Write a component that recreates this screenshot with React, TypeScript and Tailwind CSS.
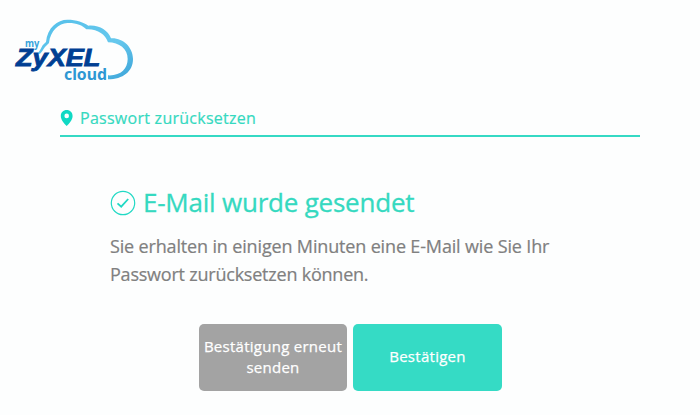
import React from "react";

function Logo() {
  return (
    <svg width="140" height="80" viewBox="0 0 420 240" role="img" aria-label="myZyXEL cloud">
      <defs>
        <linearGradient id="cloud" x1="0" y1="0" x2="1" y2="1">
          <stop offset="0" stopColor="#55c0ea" />
          <stop offset="0.6" stopColor="#66c8ed" />
          <stop offset="1" stopColor="#3ba3d8" />
        </linearGradient>
      </defs>
      <path
        d="M97 131C104 124 108 115 113 106L123 96C127 52 158 29 187 29C214 29 237 37 250 47C281 44 309 60 318 85C354 83 384 112 384 147C384 184 354 208 309 208L309 196C347 198 368 176 368 147C368 117 343 97 309 97C301 73 277 56 244 58C232 45 212 38 187 39C162 40 136 62 132 99L120 111C114 120 110 127 105 131Z"
        fill="url(#cloud)"
      />
      <text x="60" y="111" fontFamily="'Noto Sans', sans-serif" fontWeight="700" fontSize="29" textLength="43" lengthAdjust="spacingAndGlyphs" fill="#35a3dc">my</text>
      <text x="33" y="168" fontFamily="'Liberation Sans', Arial, sans-serif" fontWeight="700" fontStyle="italic" fontSize="70" textLength="253" lengthAdjust="spacingAndGlyphs" fill="#003f93" stroke="#003f93" strokeWidth="2.5">ZyXEL</text>
      <text x="177" y="209" fontFamily="'Noto Sans', sans-serif" fontWeight="700" fontSize="47" textLength="129" lengthAdjust="spacingAndGlyphs" fill="#2e97d3">cloud</text>
    </svg>
  );
}

function PinIcon() {
  return (
    <svg width="13" height="16" viewBox="0 0 13 16" fill="#10d9c4">
      <path fillRule="evenodd" d="M6.7 0C3.3 0 .8 2.6.8 5.9C.8 9.6 4.1 13.4 6.7 16C9.3 13.4 12.6 9.6 12.6 5.9C12.6 2.6 10 0 6.7 0ZM6.7 3.6A2.3 2.3 0 1 1 6.7 8.2A2.3 2.3 0 1 1 6.7 3.6Z" />
    </svg>
  );
}

function CheckIcon() {
  return (
    <svg width="26" height="26" viewBox="0 0 26 26" fill="none" stroke="#20d9c4">
      <circle cx="13" cy="13" r="11.7" strokeWidth="1.2" />
      <path d="M7.5 13.3L11.2 16.7L18.2 9" strokeWidth="1.8" />
    </svg>
  );
}

export default function App() {
  return (
    <div className="h-[415px] w-[700px] overflow-hidden bg-[#fdfefe] font-['Open_Sans',sans-serif]">
      <header className="flex pt-2.5 pl-[5px]">
        <Logo />
      </header>
      <main className="mx-[60px]">
        <div className="flex h-[47px] items-center gap-[7px] border-b-2 border-[#35d9c4] pt-[10px]">
          <PinIcon />
          <h1 className="text-base leading-6 tracking-[0.27px] whitespace-nowrap text-[#35d9c0] [-webkit-text-stroke:0.2px]">Passwort zurücksetzen</h1>
        </div>
        <section className="px-[50px] pt-[46px]">
          <div className="flex h-10 items-center gap-[7px]">
            <CheckIcon />
            <h2 className="pb-0.5 text-[26px] leading-[38px] tracking-[-0.22px] whitespace-nowrap text-[#35d9c0] [-webkit-text-stroke:0.3px]">E-Mail wurde gesendet</h2>
          </div>
          <p className="mt-[9px] text-[18px] leading-7 tracking-[-0.155px] whitespace-nowrap text-[#808080] [-webkit-text-stroke:0.2px]">
            Sie erhalten in einigen Minuten eine E-Mail wie Sie Ihr
            <br />
            <span className="tracking-[-0.22px]">Passwort zurücksetzen können.</span>
          </p>
        </section>
        <div className="mt-9 ml-[139px] flex gap-1.5 text-[15px] leading-[21px] tracking-[0.27px] text-white [-webkit-text-stroke:0.25px]">
          <button className="h-[67px] w-[148px] rounded-[5px] bg-[#a3a3a3] pb-0.5 whitespace-nowrap">
            Bestätigung erneut
            <br />
            senden
          </button>
          <button className="h-[67px] w-[149px] rounded-[5px] bg-[#35dbc5] pb-0.5">Bestätigen</button>
        </div>
      </main>
    </div>
  );
}
